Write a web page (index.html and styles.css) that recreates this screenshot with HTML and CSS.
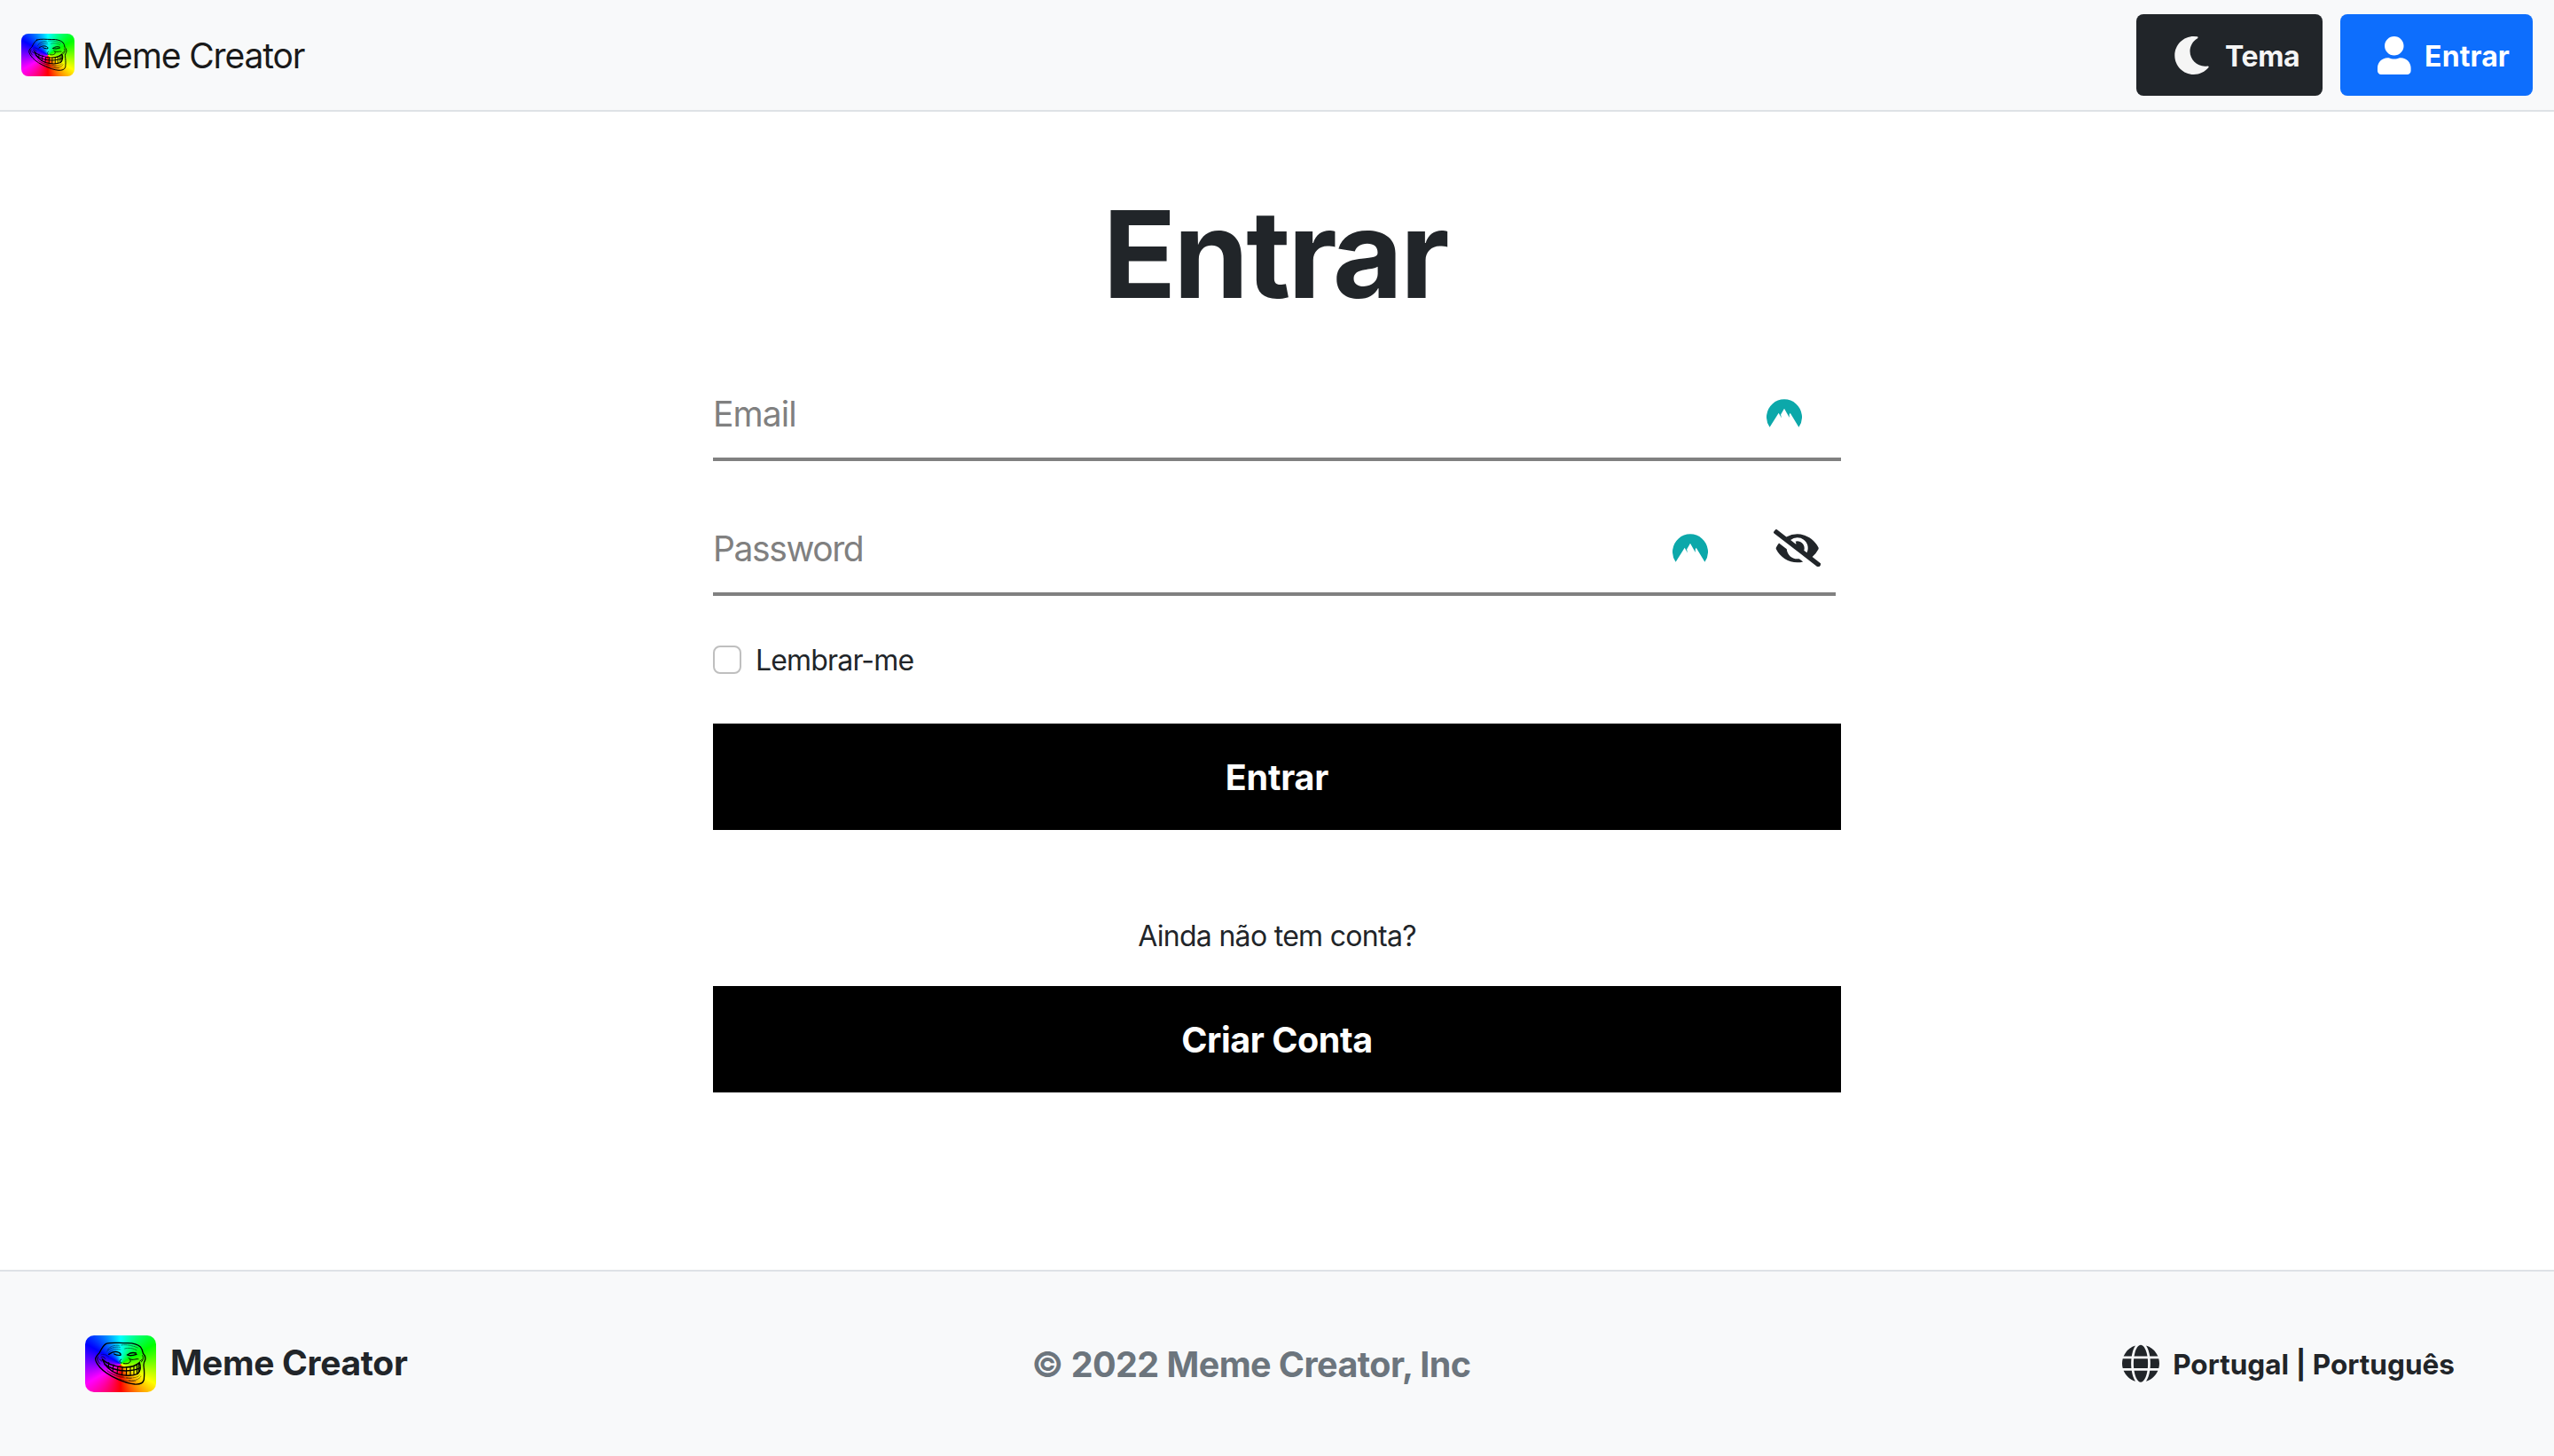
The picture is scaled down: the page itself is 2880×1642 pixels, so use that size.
FILE: index.html
```html
<!DOCTYPE html>
<html lang="pt">
<head>
<meta charset="utf-8">
<title>Meme Creator</title>
<link rel="stylesheet" href="styles.css">
</head>
<body>
<svg class="sprite" aria-hidden="true">
  <symbol id="troll" viewBox="12 12 240 192">
    <g fill="none" stroke="#000" stroke-linecap="round" stroke-linejoin="round">
      <path stroke-width="4" d="M83 40C100 34 125 38 150 38C172 37 190 42 200 52C205 58 207 66 208 73C215 80 218 88 214 98C208 106 210 112 211 122C213 138 212 150 211 162C208 174 196 178 180 177C158 175 140 168 122 160C100 150 78 138 62 120C54 110 46 100 47 90C49 80 57 76 61 70C66 60 72 46 83 40Z"/>
      <path stroke-width="3" d="M56 84C50 92 56 102 62 108M206 80C211 88 207 98 202 102"/>
      <path stroke-width="4.4" d="M70 92C84 108 110 116 140 120C162 121 182 116 196 104C200 116 199 132 190 142C170 150 142 148 122 142C100 134 80 118 70 92Z"/>
      <path stroke-width="4" d="M78 110C98 124 124 132 150 132C170 131 186 129 198 122"/>
      <path stroke-width="3.4" d="M92 104L91 122M108 111L105 134M123 117L120 141M138 120L137 146M152 121L151 147M165 119L165 147M177 117L177 144M187 112L187 142M193 108V138"/>
      <path stroke-width="2.4" d="M66 86C72 82 77 86 80 91M60 92L68 99M196 100L204 94"/>
      <path stroke-width="4" d="M92 76C102 69 112 66 120 68C128 70 134 74 132 79C124 80 116 78 110 75M156 77C164 71 174 69 184 72M154 78C162 82 174 80 186 76"/>
      <path stroke-width="3" d="M134 93C128 96 127 104 135 105M142 107C150 108 158 108 163 103C168 98 164 92 159 88M164 92C174 98 184 90 192 92"/>
      <path stroke-width="1.4" stroke-dasharray="8 3" d="M88 60C98 48 112 44 128 46M86 66C98 54 112 50 130 52M134 45C150 42 172 46 190 54M146 57C158 53 176 56 186 62M88 133C112 150 140 158 168 157M96 146C122 160 150 168 182 167M160 164C180 167 196 160 201 150M152 155C172 158 190 154 197 146"/>
      <path stroke-width="1.2" stroke-dasharray="3 3" d="M92 70C100 60 116 56 132 60M84 128C100 142 120 150 144 152M66 78C74 74 84 78 92 84"/>
    </g>
  </symbol>
  <symbol id="peaks" viewBox="0 0 40 32">
    <path fill="#0ca8aa" d="M3.6 31.8A20 20 0 1 1 36.4 31.8L26.7 15.8L25.7 17.6L25.8 20.9L20 10.8L16.1 17.5L16.9 21.6L13.7 15.8Z"/>
  </symbol>
</svg>

<header class="navbar">
  <a class="brand">
    <span class="logo"><svg><use href="#troll"/></svg></span>
    <span class="brand-name">Meme Creator</span>
  </a>
  <nav class="actions">
    <button class="btn btn-theme">
      <svg class="icon-moon" viewBox="0 0 512 512"><path fill="currentColor" d="M283.211 512c78.962 0 151.079-35.925 198.857-94.792 7.068-8.708-.639-21.43-11.562-19.35-124.203 23.654-238.262-71.576-238.262-196.954 0-72.222 38.662-138.635 101.498-174.394 9.686-5.512 7.25-20.197-3.756-22.23A258.156 258.156 0 0 0 283.211 0c-141.309 0-256 114.511-256 256 0 141.309 114.511 256 256 256z"/></svg>
      <span class="btn-label">Tema</span>
    </button>
    <button class="btn btn-login">
      <svg class="icon-user" viewBox="0 0 448 512"><path fill="currentColor" d="M224 256c70.7 0 128-57.3 128-128S294.7 0 224 0 96 57.3 96 128s57.3 128 128 128zm89.6 32h-16.700c-22.2 10.2-46.9 16-72.900 16s-50.600-5.800-72.900-16h-16.700C60.200 288 0 348.200 0 422.400V464c0 26.500 21.500 48 48 48h352c26.500 0 48-21.500 48-48v-41.600c0-74.200-60.200-134.400-134.400-134.400z"/></svg>
      <span class="btn-label">Entrar</span>
    </button>
  </nav>
</header>

<main class="content">
  <h1 class="title">Entrar</h1>
  <form class="form">
    <div class="field field-email">
      <span class="placeholder">Email</span>
      <svg class="peaks"><use href="#peaks"/></svg>
    </div>
    <div class="field field-password">
      <span class="placeholder">Password</span>
      <svg class="peaks"><use href="#peaks"/></svg>
      <svg class="icon-eye" viewBox="0 0 640 512"><path fill="currentColor" d="M320 400c-75.850 0-137.250-58.710-142.900-133.110L72.200 185.820c-13.790 17.300-26.480 35.590-36.720 55.590a32.350 32.350 0 0 0 0 29.190C89.710 376.410 197.070 448 320 448c26.910 0 52.870-4 77.890-10.460L346 397.390a144.130 144.130 0 0 1-26 2.610zm313.820 58.100l-110.550-85.440a331.250 331.250 0 0 0 81.250-102.070 32.350 32.350 0 0 0 0-29.190C550.290 135.590 442.930 64 320 64a308.150 308.150 0 0 0-147.320 37.700L45.460 3.370A16 16 0 0 0 23 6.180L3.370 31.450A16 16 0 0 0 6.180 53.900l588.360 454.730a16 16 0 0 0 22.460-2.810l19.640-25.270a16 16 0 0 0-2.820-22.450zm-183.720-142l-39.300-30.380A94.750 94.750 0 0 0 416 256a94.760 94.760 0 0 0-121.310-92.210A47.650 47.650 0 0 1 304 192a46.640 46.640 0 0 1-1.540 10l-73.610-56.890A142.310 142.310 0 0 1 320 112a143.920 143.920 0 0 1 144 144c0 21.630-5.290 41.790-13.900 60.110z"/></svg>
    </div>
    <label class="remember">
      <span class="checkbox"></span>
      <span class="remember-text">Lembrar-me</span>
    </label>
    <button type="button" class="submit submit-login">Entrar</button>
    <p class="question">Ainda não tem conta?</p>
    <button type="button" class="submit submit-create">Criar Conta</button>
  </form>
</main>

<footer class="footer">
  <a class="footer-brand">
    <span class="logo logo-large"><svg><use href="#troll"/></svg></span>
    <span class="footer-name">Meme Creator</span>
  </a>
  <span class="copyright">© 2022 Meme Creator, Inc</span>
  <a class="locale">
    <svg class="icon-globe" viewBox="0 0 496 512"><path fill="currentColor" d="M336.500 160C322 70.700 287.800 8 248 8s-74 62.700-88.500 152h177zM152 256c0 22.200 1.200 43.500 3.300 64h185.300c2.100-20.500 3.300-41.800 3.300-64s-1.200-43.500-3.300-64H155.300c-2.100 20.500-3.300 41.800-3.300 64zm324.700-96c-28.600-67.900-86.500-120.400-158-141.600 24.400 33.800 41.200 84.700 50 141.600h108zM177.200 18.400C105.800 39.600 47.800 92.100 19.300 160h108c8.700-56.900 25.500-107.800 49.900-141.600zM487.400 192H372.700c2.100 21 3.300 42.500 3.300 64s-1.200 43-3.300 64h114.600c5.500-20.500 8.600-41.800 8.600-64s-3.100-43.500-8.500-64zM120 256c0-21.500 1.200-43 3.300-64H8.600C3.200 212.500 0 233.800 0 256s3.200 43.500 8.600 64h114.600c-2-21-3.200-42.500-3.200-64zm39.500 96c14.500 89.300 48.700 152 88.500 152s74-62.700 88.500-152h-177zm159.300 141.600c71.400-21.200 129.400-73.700 158-141.600h-108c-8.800 56.900-25.600 107.800-50 141.600zM19.300 352c28.600 67.900 86.500 120.400 158 141.600-24.400-33.800-41.200-84.700-50-141.600h-108z"/></svg>
    <span class="locale-name">Portugal | Português</span>
  </a>
</footer>
</body>
</html>
```
FILE: styles.css
```css
* { box-sizing: border-box; }

body {
  margin: 0;
  height: 1642px;
  display: flex;
  flex-direction: column;
  background: #fff;
  color: #212529;
  font-family: Inter, "Liberation Sans", sans-serif;
  font-size: 32px;
  line-height: 48px;
}

button {
  border: 0;
  padding: 0;
  font: inherit;
  color: inherit;
}

svg { display: block; flex: none; }
.sprite { position: absolute; width: 0; height: 0; }

/* Logo */
.logo {
  flex: none;
  width: 60px;
  height: 48px;
  border-radius: 8px;
  overflow: hidden;
  background: conic-gradient(#0ff, #0f0, #ff0, #f00, #f0f, #00f, #0ff);
}
.logo svg { width: 100%; height: 100%; }
.logo-large { width: 80px; height: 64px; border-radius: 10px; }

/* Top bar */
.navbar {
  height: 126px;
  padding: 0 24px;
  display: flex;
  align-items: center;
  justify-content: space-between;
  background: #f8f9fa;
  border-bottom: 2px solid #dee2e6;
}
.brand { display: flex; align-items: center; gap: 9px; color: #1a1a1a; }
.brand-name { font-size: 39px; letter-spacing: -1.12px; padding-top: 2px; }
.actions { display: flex; gap: 20px; }
.btn {
  height: 92px;
  display: flex;
  align-items: center;
  border-radius: 8px;
  font-weight: 700;
}
.btn-label { padding-top: 4px; }
.btn-theme {
  width: 210px;
  padding-left: 41px;
  gap: 16px;
  background: #212529;
  color: #f5f5f5;
  letter-spacing: -0.38px;
}
.btn-login {
  width: 217px;
  padding-left: 42px;
  gap: 15.5px;
  background: #0d6efd;
  color: #fff;
  letter-spacing: 0.1px;
}
.icon-moon { width: 43px; height: 43px; }
.icon-user { width: 37.6px; height: 43px; }

/* Sign-in form */
.content {
  flex: 1;
  width: 1272px;
  margin: 0 auto;
  padding-top: 78px;
}
.title {
  margin: 0;
  padding-right: 5px;
  height: 212px;
  font-size: 136.6px;
  line-height: 165px;
  font-weight: 700;
  letter-spacing: -3.1px;
  text-align: center;
}
.form { display: flex; flex-direction: column; }
.field {
  height: 104px;
  display: flex;
  align-items: center;
  border-bottom: 4px solid #808080;
  color: #808080;
  font-size: 39px;
}
.placeholder { flex: 1; padding-top: 1px; }
.field-email { padding-right: 44px; letter-spacing: -0.9px; }
.field-password { width: 1266px; margin-top: 48px; padding-right: 17px; letter-spacing: -1.4px; }
.peaks { width: 40px; height: 32px; }
.icon-eye { width: 53.4px; height: 42.7px; margin-left: 73.6px; color: #212529; }
.remember {
  height: 48px;
  margin-top: 48px;
  display: flex;
  align-items: center;
  gap: 16px;
  letter-spacing: -0.83px;
}
.checkbox {
  width: 32px;
  height: 32px;
  border: 2px solid #bfbfbf;
  border-radius: 8px;
  background: #fff;
}
.remember-text { padding-top: 1px; }
.submit {
  height: 120px;
  padding-top: 1px;
  background: #000;
  color: #fff;
  font-size: 39.5px;
  font-weight: 700;
}
.submit-login { margin-top: 48px; letter-spacing: -0.2px; }
.submit-create { margin-top: 32px; letter-spacing: -0.45px; }
.question { margin: 96px 0 0; text-align: center; letter-spacing: -0.7px; }

/* Footer */
.footer {
  height: 210px;
  padding: 0 112px 0 96px;
  display: flex;
  align-items: center;
  justify-content: space-between;
  border-top: 2px solid #dee2e6;
  background: #f8f9fa;
  font-weight: 700;
}
.footer-brand { display: flex; align-items: center; gap: 16px; }
.footer-name { font-size: 39px; letter-spacing: -0.32px; padding-bottom: 2px; }
.copyright { font-size: 39.5px; letter-spacing: -0.57px; color: #6c757d; padding-top: 1px; margin-right: 31px; }
.locale { display: flex; align-items: center; gap: 15px; }
.icon-globe { width: 42px; height: 43.4px; }
.locale-name { font-size: 31.5px; letter-spacing: 0.02px; padding-top: 1px; }
```
